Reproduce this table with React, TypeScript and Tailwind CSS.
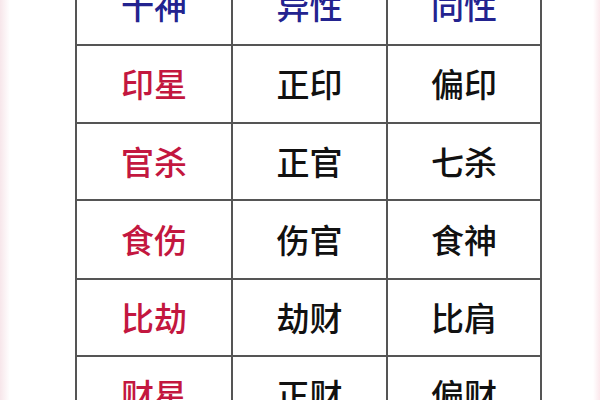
import React from "react";

const rows: [string, string, string][] = [
  ["印星", "正印", "偏印"],
  ["官杀", "正官", "七杀"],
  ["食伤", "伤官", "食神"],
  ["比劫", "劫财", "比肩"],
  ["财星", "正财", "偏财"],
];

const heights = ["h-[76px]", "h-[75px]", "h-[77px]", "h-[75px]", "h-[76px]"];

export default function App() {
  return (
    <div
      className="relative w-[600px] h-[400px] overflow-hidden bg-white"
      style={{ fontFamily: '"Noto Sans CJK SC", "Noto Sans", sans-serif' }}
    >
      <div className="absolute left-0 top-0 h-full w-[10px] bg-gradient-to-r from-[#f7e6ea] to-white" />
      <div className="absolute right-0 top-0 h-full w-[7px] bg-gradient-to-r from-white to-[#fbe8ec]" />
      <div className="ml-[75px] mt-[-34px] w-[467px] bg-[#555555] p-[2px] grid grid-cols-[154px_153px_152px] gap-[2px]">
        {["十神", "异性", "同性"].map((t) => (
          <div
            key={t}
            className="h-[76px] bg-white flex items-center justify-center text-[33px] font-medium text-[#23238f]"
          >
            {t}
          </div>
        ))}
        {rows.map((r, i) =>
          r.map((t, j) => (
            <div
              key={`${i}-${j}`}
              className={`${heights[i]} bg-white flex items-center justify-center text-[33px] font-medium ${
                j === 0 ? "text-[#c3173f]" : "text-[#111111]"
              }`}
            >
              {t}
            </div>
          ))
        )}
      </div>
    </div>
  );
}
